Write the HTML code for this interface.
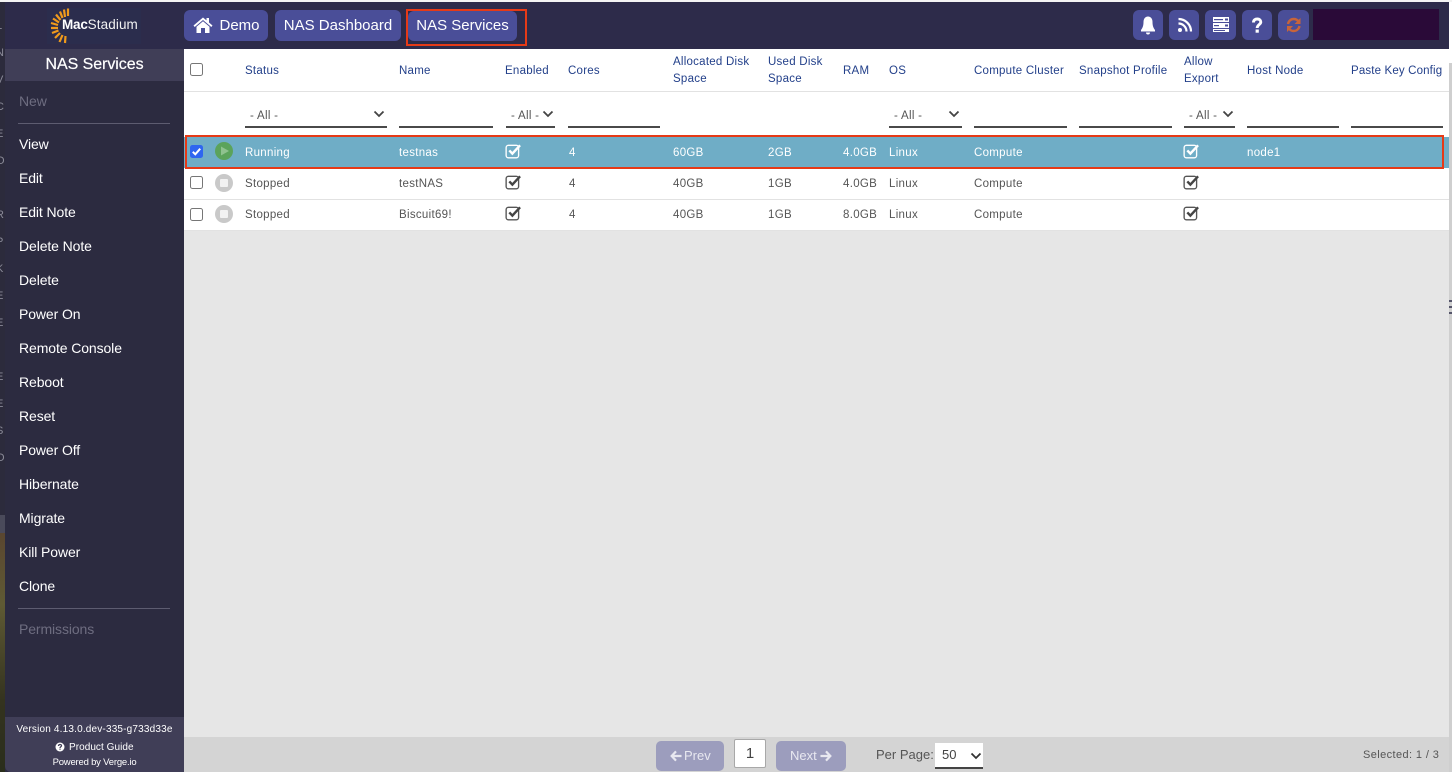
<!DOCTYPE html>
<html lang="en"><head><meta charset="utf-8"><title>NAS Services</title>
<style>
*{box-sizing:border-box}
html,body{margin:0;padding:0;width:1452px;height:772px;overflow:hidden;background:#2c2b40;font-family:"Liberation Sans",sans-serif}
.a{position:absolute;white-space:nowrap}
.nb{position:absolute;background:#4a4e98;border-radius:6px;color:#fff;font-size:15px;line-height:31px;height:31px;text-align:center}
.ib{position:absolute;top:10px;height:30px;background:#4a4e98;border-radius:6px}
.ib svg{position:absolute;left:0;top:0}
.m{position:absolute;left:19px;color:#fff;font-size:14px;line-height:18px;letter-spacing:-.1px}
.h{position:absolute;color:#23408a;font-size:11.5px;line-height:17px;letter-spacing:.25px;margin-top:1px}
.c{position:absolute;color:#555;font-size:11.5px;line-height:16px;letter-spacing:.3px;white-space:nowrap;margin-top:1px}
.w{color:#fff}
.f{position:absolute;top:126px;height:2px;background:#4a4a4a}
.s{position:absolute;top:108px;color:#555;font-size:11.5px;line-height:16px;letter-spacing:.3px}
.cb{position:absolute;left:190px;width:13px;height:13px;border:1px solid #767676;border-radius:2.5px;background:#fff}
.line{position:absolute;left:184px;width:1265px;height:1px;background:#e2e2e2}
.ck{position:absolute}
.lt{position:absolute;left:-4px;font-size:11px;line-height:12px;color:#8a8a98}
</style></head><body>
<!-- desktop strip behind window -->
<div class="a" style="left:0;top:0;width:5px;height:772px;overflow:hidden;background:#2c2b3c">
<span class="lt" style="top:20px">L</span><span class="lt" style="top:47px">N</span><span class="lt" style="top:74px">V</span><span class="lt" style="top:101px">C</span><span class="lt" style="top:128px">E</span><span class="lt" style="top:155px">O</span><span class="lt" style="top:209px">R</span><span class="lt" style="top:236px">P</span><span class="lt" style="top:263px">K</span><span class="lt" style="top:290px">E</span><span class="lt" style="top:317px">E</span><span class="lt" style="top:371px">E</span><span class="lt" style="top:398px">E</span><span class="lt" style="top:425px">S</span><span class="lt" style="top:452px">O</span>
</div>
<div class="a" style="left:0;top:515px;width:5px;height:18px;background:#4a4a5a"></div>
<div class="a" style="left:0;top:533px;width:5px;height:239px;background:linear-gradient(#5a4630,#5f5a34 30%,#34331f 70%,#2a2e1c)"></div>
<div class="a" style="left:0;top:0;width:1452px;height:2px;background:#f4f4f4"></div>
<div class="a" style="left:1449px;top:2px;width:3px;height:61px;background:#fff"></div>
<!-- top bar -->
<div class="a" style="left:5px;top:2px;width:1444px;height:47px;background:#2d2b4a"></div>
<div class="a" style="left:47px;top:8px;width:94px;height:36px;background:#2b2d4d"></div>
<svg class="a" style="left:49px;top:7px" width="26" height="38" viewBox="0 0 26 38">
<g stroke="#f09a1c" stroke-width="2.200" fill="none">
<path d="M19 1.500V9M15 2.500 16 10M11 4.500 13.500 11M7 7.500 11.500 13M4 11.500 10 15.500M2 16 9 18M2 21H9M3 26 9.500 23.500M6 31 11 26M10.500 35 13.500 28M16 36 16.500 29"/>
</g></svg>
<div class="a" style="left:62px;top:16px;font-size:13.5px;line-height:18px;color:#fff;font-weight:bold;letter-spacing:-.2px">Mac<span style="font-weight:normal;letter-spacing:.1px;color:#f2f2f2">Stadium</span></div>

<div class="nb" style="left:184px;top:10px;width:84px;padding-left:27px">Demo</div>
<svg class="a" style="left:193px;top:16px" width="20" height="18" viewBox="0 0 20 18"><path fill="#fff" d="M10 1.500 0.500 9.500 1.700 11 10 4 18.300 11 19.500 9.500 16 6.500V2H13.500V4.400ZM10 5.300 3.500 10.800V17H8V12H12V17H16.500V10.800Z"/></svg>
<div class="nb" style="left:275px;top:10px;width:126px">NAS Dashboard</div>
<div class="nb" style="left:408px;top:11px;width:109px;height:30px;line-height:29px">NAS Services</div>
<div class="a" style="left:406px;top:9px;width:121px;height:37px;border:2px solid #e63a17"></div>

<div class="ib" style="left:1133px;width:30px"><svg width="30" height="30" viewBox="0 0 30 30"><path fill="#fff" d="M15 6.500C12 6.500 10.500 9 10.500 12 10.500 16 9.500 18 8 20V21.500H22V20C20.500 18 19.500 16 19.500 12 19.500 9 18 6.500 15 6.500ZM13 22.500A2 2 0 0 0 17 22.500Z"/></svg></div>
<div class="ib" style="left:1169px;width:30px"><svg width="30" height="30" viewBox="0 0 30 30"><circle cx="11" cy="20" r="2" fill="#fff"/><path fill="none" stroke="#fff" stroke-width="2.200" d="M9.500 13.500A8 8 0 0 1 17.500 21.500M9.500 9A12.500 12.500 0 0 1 22 21.500"/></svg></div>
<div class="ib" style="left:1205px;width:31px"><svg width="31" height="30" viewBox="0 0 31 30"><g fill="#fff"><path d="M8 7H24V12H8ZM8 13H24V18H8ZM8 19H24V22H8Z"/></g><g fill="#4a4e98"><rect x="9" y="9" width="9" height="1.200"/><rect x="20" y="8.500" width="3" height="2"/><rect x="9" y="15" width="5" height="1.200"/><rect x="20" y="14.500" width="3" height="2"/><rect x="9" y="20" width="11" height="1"/></g></svg></div>
<div class="ib" style="left:1242px;width:30px"><svg width="30" height="30" viewBox="0 0 30 30"><path fill="none" stroke="#fff" stroke-width="2.900" d="M11.500 12.500C11.500 10 13.300 9 15.300 9 17.400 9 18.800 10.300 18.800 12 18.800 14.500 15.200 14.800 15.200 18"/><rect x="13.600" y="19.500" width="3.200" height="3.200" fill="#fff"/></svg></div>
<div class="ib" style="left:1278px;width:31px"><svg width="31" height="30" viewBox="0 0 31 30"><path fill="none" stroke="#c8643a" stroke-width="2.400" d="M10 14C10.500 11 13 9 15.700 9 17.800 9 19.400 10 20.500 11.500M21.500 16C21 19 18.500 21 15.700 21 13.700 21 12 20 11 18.500"/><path fill="#c8643a" d="M22.500 8V14H16.500ZM9 22V16H15Z"/></svg></div>
<div class="a" style="left:1313px;top:9px;width:126px;height:31px;background:#2a0a38"></div>

<!-- sidebar -->
<div class="a" style="left:5px;top:49px;width:179px;height:32px;background:#403e57;color:#fff;font-size:16px;line-height:32px;text-align:center;letter-spacing:-.05px;-webkit-text-stroke:.2px #fff">NAS Services</div>
<div class="m" style="top:92px;color:#6e6d80">New</div>
<div class="a" style="left:18px;top:123px;width:152px;height:1px;background:#5d5c70"></div>
<div class="m" style="top:135px">View</div>
<div class="m" style="top:169px">Edit</div>
<div class="m" style="top:203px">Edit Note</div>
<div class="m" style="top:237px">Delete Note</div>
<div class="m" style="top:271px">Delete</div>
<div class="m" style="top:305px">Power On</div>
<div class="m" style="top:339px">Remote Console</div>
<div class="m" style="top:373px">Reboot</div>
<div class="m" style="top:407px">Reset</div>
<div class="m" style="top:441px">Power Off</div>
<div class="m" style="top:475px">Hibernate</div>
<div class="m" style="top:509px">Migrate</div>
<div class="m" style="top:543px">Kill Power</div>
<div class="m" style="top:577px">Clone</div>
<div class="a" style="left:18px;top:608px;width:152px;height:1px;background:#5d5c70"></div>
<div class="m" style="top:620px;color:#6e6d80">Permissions</div>
<div class="a" style="left:5px;top:717px;width:179px;height:55px;background:#403e57;border-bottom-left-radius:6px"></div>
<div class="a" style="left:5px;top:723px;width:179px;text-align:center;color:#fff;font-size:10px;line-height:14px;letter-spacing:.18px">Version 4.13.0.dev-335-g733d33e</div>
<div class="a" style="left:69px;top:741px;color:#fff;font-size:10px;line-height:14px;letter-spacing:.05px">Product Guide</div>
<svg class="a" style="left:55px;top:742px" width="10" height="10" viewBox="0 0 10 10"><circle cx="5" cy="5" r="4.500" fill="#fff"/><path fill="none" stroke="#403e57" stroke-width="1.300" d="M3.500 4C3.500 2 6.500 2 6.500 3.800 6.500 4.800 5 4.800 5 6"/><rect x="4.400" y="6.600" width="1.200" height="1.200" fill="#403e57"/></svg>
<div class="a" style="left:5px;top:756px;width:179px;text-align:center;color:#fff;font-size:9.5px;line-height:14px;letter-spacing:-.2px">Powered by Verge.io</div>

<!-- main -->
<div class="a" style="left:184px;top:49px;width:1265px;height:688px;background:#e6e6e6"></div>
<div class="a" style="left:184px;top:49px;width:1265px;height:182px;background:#fff"></div>
<div class="a" style="left:1449px;top:63px;width:3px;height:709px;background:#cfcfcf"></div>
<div class="a" style="left:1449px;top:300px;width:3px;height:2px;background:#55556a"></div>
<div class="a" style="left:1449px;top:306px;width:3px;height:2px;background:#55556a"></div>
<div class="a" style="left:1449px;top:312px;width:3px;height:2px;background:#55556a"></div>
<div class="line" style="top:91px"></div>
<div class="a" style="left:184px;top:137px;width:1265px;height:31px;background:#6fadc6"></div>
<div class="line" style="top:199px"></div>
<div class="line" style="top:230px"></div>

<!-- header -->
<div class="cb" style="top:63px"></div>
<div class="h" style="left:245px;top:62px">Status</div>
<div class="h" style="left:399px;top:62px">Name</div>
<div class="h" style="left:505px;top:62px">Enabled</div>
<div class="h" style="left:568px;top:62px">Cores</div>
<div class="h" style="left:673px;top:53px">Allocated Disk<br>Space</div>
<div class="h" style="left:768px;top:53px">Used Disk<br>Space</div>
<div class="h" style="left:843px;top:62px">RAM</div>
<div class="h" style="left:889px;top:62px">OS</div>
<div class="h" style="left:974px;top:62px">Compute Cluster</div>
<div class="h" style="left:1079px;top:62px">Snapshot Profile</div>
<div class="h" style="left:1184px;top:53px">Allow<br>Export</div>
<div class="h" style="left:1247px;top:62px">Host Node</div>
<div class="h" style="left:1351px;top:62px;letter-spacing:.15px">Paste Key Config</div>

<!-- filters -->
<div class="f" style="left:245px;width:142px"></div>
<div class="s" style="left:250px">- All -</div>
<svg class="a" style="left:373px;top:110px" width="12" height="8" viewBox="0 0 12 8"><path fill="none" stroke="#444" stroke-width="1.800" d="M1.500 1.500 6 6 10.500 1.500"/></svg>
<div class="f" style="left:399px;width:94px"></div>
<div class="f" style="left:506px;width:49px"></div>
<div class="s" style="left:511px">- All -</div>
<svg class="a" style="left:542px;top:110px" width="12" height="8" viewBox="0 0 12 8"><path fill="none" stroke="#444" stroke-width="1.800" d="M1.500 1.500 6 6 10.500 1.500"/></svg>
<div class="f" style="left:568px;width:92px"></div>
<div class="f" style="left:889px;width:73px"></div>
<div class="s" style="left:894px">- All -</div>
<svg class="a" style="left:948px;top:110px" width="12" height="8" viewBox="0 0 12 8"><path fill="none" stroke="#444" stroke-width="1.800" d="M1.500 1.500 6 6 10.500 1.500"/></svg>
<div class="f" style="left:974px;width:93px"></div>
<div class="f" style="left:1079px;width:93px"></div>
<div class="f" style="left:1184px;width:51px"></div>
<div class="s" style="left:1189px">- All -</div>
<svg class="a" style="left:1222px;top:110px" width="12" height="8" viewBox="0 0 12 8"><path fill="none" stroke="#444" stroke-width="1.800" d="M1.500 1.500 6 6 10.500 1.500"/></svg>
<div class="f" style="left:1247px;width:92px"></div>
<div class="f" style="left:1351px;width:92px"></div>

<!-- row 1 -->
<svg class="a" style="left:190px;top:145px" width="13" height="13" viewBox="0 0 13 13"><rect width="13" height="13" rx="2.500" fill="#2f66f0"/><path fill="none" stroke="#fff" stroke-width="2" d="M2.800 6.800 5.300 9.300 10.200 3.700"/></svg>
<svg class="a" style="left:215px;top:142px" width="18" height="18" viewBox="0 0 18 18"><circle cx="9" cy="9" r="9" fill="#5ba35b"/><path fill="#8fc28f" d="M6 4.500 14 9 6 13.500Z"/></svg>
<div class="c w" style="left:245px;top:144px">Running</div>
<div class="c w" style="left:399px;top:144px">testnas</div>
<svg class="ck" style="left:505px;top:143px" width="17" height="16" viewBox="0 0 15 14"><rect x="1" y="2" width="11" height="11" rx="2" fill="none" stroke="#fff" stroke-width="1.200"/><path fill="none" stroke="#fff" stroke-width="2.100" d="M3.800 6.500 6.500 9.300 13.300 2"/></svg>
<div class="c w" style="left:569px;top:144px">4</div>
<div class="c w" style="left:673px;top:144px">60GB</div>
<div class="c w" style="left:768px;top:144px">2GB</div>
<div class="c w" style="left:843px;top:144px">4.0GB</div>
<div class="c w" style="left:889px;top:144px">Linux</div>
<div class="c w" style="left:974px;top:144px">Compute</div>
<svg class="ck" style="left:1183px;top:143px" width="17" height="16" viewBox="0 0 15 14"><rect x="1" y="2" width="11" height="11" rx="2" fill="none" stroke="#fff" stroke-width="1.200"/><path fill="none" stroke="#fff" stroke-width="2.100" d="M3.800 6.500 6.500 9.300 13.300 2"/></svg>
<div class="c w" style="left:1247px;top:144px">node1</div>
<div class="a" style="left:185px;top:135px;width:1259px;height:34px;border:2px solid #e63a17"></div>

<!-- row 2 -->
<div class="cb" style="top:176px"></div>
<svg class="a" style="left:215px;top:174px" width="18" height="18" viewBox="0 0 18 18"><circle cx="9" cy="9" r="9" fill="#c9c9c9"/><rect x="5" y="5" width="8" height="8" rx="1" fill="#f2f2f2"/></svg>
<div class="c" style="left:245px;top:175px">Stopped</div>
<div class="c" style="left:399px;top:175px">testNAS</div>
<svg class="ck" style="left:505px;top:174px" width="17" height="16" viewBox="0 0 15 14"><rect x="1" y="2" width="11" height="11" rx="2" fill="none" stroke="#555" stroke-width="1.200"/><path fill="none" stroke="#444" stroke-width="2.100" d="M3.800 6.500 6.500 9.300 13.300 2"/></svg>
<div class="c" style="left:569px;top:175px">4</div>
<div class="c" style="left:673px;top:175px">40GB</div>
<div class="c" style="left:768px;top:175px">1GB</div>
<div class="c" style="left:843px;top:175px">4.0GB</div>
<div class="c" style="left:889px;top:175px">Linux</div>
<div class="c" style="left:974px;top:175px">Compute</div>
<svg class="ck" style="left:1183px;top:174px" width="17" height="16" viewBox="0 0 15 14"><rect x="1" y="2" width="11" height="11" rx="2" fill="none" stroke="#555" stroke-width="1.200"/><path fill="none" stroke="#444" stroke-width="2.100" d="M3.800 6.500 6.500 9.300 13.300 2"/></svg>

<!-- row 3 -->
<div class="cb" style="top:208px"></div>
<svg class="a" style="left:215px;top:205px" width="18" height="18" viewBox="0 0 18 18"><circle cx="9" cy="9" r="9" fill="#c9c9c9"/><rect x="5" y="5" width="8" height="8" rx="1" fill="#f2f2f2"/></svg>
<div class="c" style="left:245px;top:206px">Stopped</div>
<div class="c" style="left:399px;top:206px">Biscuit69!</div>
<svg class="ck" style="left:505px;top:205px" width="17" height="16" viewBox="0 0 15 14"><rect x="1" y="2" width="11" height="11" rx="2" fill="none" stroke="#555" stroke-width="1.200"/><path fill="none" stroke="#444" stroke-width="2.100" d="M3.800 6.500 6.500 9.300 13.300 2"/></svg>
<div class="c" style="left:569px;top:206px">4</div>
<div class="c" style="left:673px;top:206px">40GB</div>
<div class="c" style="left:768px;top:206px">1GB</div>
<div class="c" style="left:843px;top:206px">8.0GB</div>
<div class="c" style="left:889px;top:206px">Linux</div>
<div class="c" style="left:974px;top:206px">Compute</div>
<svg class="ck" style="left:1183px;top:205px" width="17" height="16" viewBox="0 0 15 14"><rect x="1" y="2" width="11" height="11" rx="2" fill="none" stroke="#555" stroke-width="1.200"/><path fill="none" stroke="#444" stroke-width="2.100" d="M3.800 6.500 6.500 9.300 13.300 2"/></svg>

<!-- footer -->
<div class="a" style="left:184px;top:737px;width:1265px;height:35px;background:#d4d4d4"></div>
<div class="a" style="left:656px;top:741px;width:68px;height:30px;background:#9c9dbd;border-radius:5px;color:#e8e8f0;font-size:13px;line-height:29px;padding-left:28px">Prev</div>
<svg class="a" style="left:670px;top:750px" width="12" height="12" viewBox="0 0 13 13"><path fill="none" stroke="#e8e8f0" stroke-width="2.400" d="M6.500 1.500 1.800 6.500 6.500 11.500M2 6.500H12.500"/></svg>
<div class="a" style="left:734px;top:739px;width:32px;height:29px;background:#fff;border:1px solid #a8a8a8;border-radius:2px;color:#444;font-size:15px;line-height:27px;text-align:center">1</div>
<div class="a" style="left:776px;top:741px;width:70px;height:30px;background:#9c9dbd;border-radius:5px;color:#e8e8f0;font-size:13px;line-height:29px;padding-left:14px">Next</div>
<svg class="a" style="left:820px;top:750px" width="12" height="12" viewBox="0 0 13 13"><path fill="none" stroke="#e8e8f0" stroke-width="2.400" d="M6.500 1.500 11.200 6.500 6.500 11.500M11 6.500H.5"/></svg>
<div class="a" style="left:876px;top:747px;color:#555;font-size:13px;line-height:16px">Per Page:</div>
<div class="a" style="left:935px;top:743px;width:48px;height:26px;background:#fff;border-bottom:2px solid #444;color:#444;font-size:13px;line-height:24px;padding-left:7px">50</div>
<svg class="a" style="left:970px;top:752px" width="12" height="8" viewBox="0 0 12 8"><path fill="none" stroke="#333" stroke-width="1.800" d="M1.500 1.500 6 6 10.500 1.500"/></svg>
<div class="a" style="left:1363px;top:748px;color:#555;font-size:11px;line-height:14px;letter-spacing:.4px">Selected: 1 / 3</div>
</body></html>
